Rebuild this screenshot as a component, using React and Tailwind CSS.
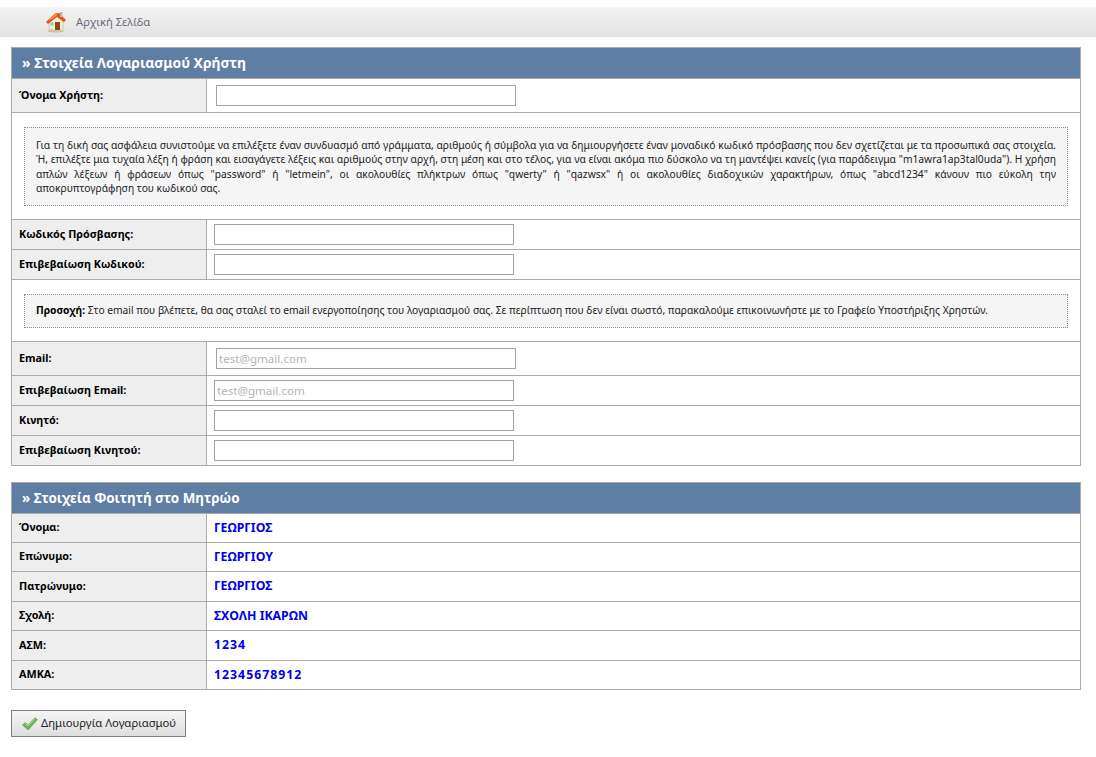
const font = "font-['Noto_Sans','DejaVu_Sans',sans-serif]";

const infoLines = [
  'Για τη δική σας ασφάλεια συνιστούμε να επιλέξετε έναν συνδυασμό από γράμματα, αριθμούς ή σύμβολα για να δημιουργήσετε έναν μοναδικό κωδικό πρόσβασης που δεν σχετίζεται με τα προσωπικά σας στοιχεία.',
  'Ή, επιλέξτε μια τυχαία λέξη ή φράση και εισαγάγετε λέξεις και αριθμούς στην αρχή, στη μέση και στο τέλος, για να είναι ακόμα πιο δύσκολο να τη μαντέψει κανείς (για παράδειγμα "m1awra1ap3tal0uda"). Η χρήση',
  'απλών λέξεων ή φράσεων όπως "password" ή "letmein", οι ακολουθίες πλήκτρων όπως "qwerty" ή "qazwsx" ή οι ακολουθίες διαδοχικών χαρακτήρων, όπως "abcd1234" κάνουν πιο εύκολη την',
];

const students = [
  { label: 'Όνομα:', value: 'ΓΕΩΡΓΙΟΣ', h: 'h-[29px]' },
  { label: 'Επώνυμο:', value: 'ΓΕΩΡΓΙΟΥ', h: 'h-[29px]' },
  { label: 'Πατρώνυμο:', value: 'ΓΕΩΡΓΙΟΣ', h: 'h-[30px]' },
  { label: 'Σχολή:', value: 'ΣΧΟΛΗ ΙΚΑΡΩΝ', h: 'h-[29px]' },
  { label: 'ΑΣΜ:', value: '1234', h: 'h-[30px]', digits: true },
  { label: 'ΑΜΚΑ:', value: '12345678912', h: 'h-[28px]', digits: true },
];

function HomeIcon() {
  return (
    <svg width="22" height="22" viewBox="0 0 22 22">
      <ellipse cx="11" cy="20" rx="8.5" ry="1.4" fill="#9c9c94" opacity="0.5" />
      <path d="M4 10 L4 18 Q10 21 18 19 L18 10 L11 4 Z" fill="#f7eccb" stroke="#cdb67e" strokeWidth="0.6" />
      <path d="M1 11 L10 2.5 L14 2 L21 9 L19 11 L12 6 L3 13 Z" fill="#d9561c" />
      <path d="M2 10 L10 3 L13 3 L8 8 Z" fill="#f08a3c" />
      <rect x="15" y="1" width="2.5" height="5" fill="#b8b8b0" />
      <rect x="10" y="11" width="5" height="8" fill="#8a4a1e" />
      <rect x="5.5" y="11.5" width="3" height="3" fill="#8fc2e0" />
    </svg>
  );
}

function CheckIcon() {
  return (
    <svg width="16" height="14" viewBox="0 0 16 14">
      <path d="M0.5 8 L3 5.5 L6 8 L13 0.8 L15.5 2.5 L6.2 13 Z" fill="#6cb356" stroke="#6f9a68" strokeWidth="0.6" />
      <path d="M3 6.5 L6 9 L13 2" fill="none" stroke="#a6d98f" strokeWidth="1" />
    </svg>
  );
}

function Header({ size, children }) {
  return (
    <div className={`h-[31px] bg-[#5f7ea3] flex items-center pl-[10px] text-white ${size} font-bold border-b border-[#aaaaaa]`}>
      » {children}
    </div>
  );
}

function Row({ label, h, children }) {
  return (
    <div className={`flex ${h} border-b border-[#aaaaaa] last:border-b-0`}>
      <div className="w-[195px] shrink-0 bg-[#eeeeee] border-r border-[#aaaaaa] pl-[7px] pb-[1px] flex items-center font-bold text-[10.8px] text-black">
        {label}
      </div>
      <div className="flex-1 flex items-center">{children}</div>
    </div>
  );
}

function Field({ placeholder, offset }) {
  return (
    <input
      type="text"
      placeholder={placeholder}
      className={`${offset ? 'ml-[9px]' : 'ml-[7px]'} w-[300px] h-[21px] border border-[#a3a3a3] bg-white px-[2px] text-[11.6px] placeholder:text-[#b5b5b5] outline-none`}
    />
  );
}

function NoteBox({ children, className }) {
  return (
    <div className={`bg-[#f5f5f5] border border-dotted border-[#7f8fa8] ${className}`}>{children}</div>
  );
}

export default function App() {
  return (
    <div className={`${font} min-h-screen bg-white pt-[7px] text-[10.25px] text-[#222]`}>
      <div className="h-[30px] bg-gradient-to-b from-[#f4f4f4] to-[#e2e2e2] flex items-center pl-[45px] gap-[9px] text-[11.2px] text-[#6b6b7b]">
        <HomeIcon />
        <span>Αρχική Σελίδα</span>
      </div>

      <div className="mx-[11px] mt-[10px] w-[1070px]">
        <div className="border border-[#aaaaaa]">
          <Header size="text-[13.9px]">Στοιχεία Λογαριασμού Χρήστη</Header>
          <Row label="Όνομα Χρήστη:" h="h-[34px]"><Field offset /></Row>
          <div className="h-[107px] border-b border-[#aaaaaa] px-[12px] pt-[14px]">
            <NoteBox className="h-[79px] px-[11px] pt-[10px] leading-[14.4px]">
              {infoLines.map((line) => (
                <div key={line} className="text-justify [text-align-last:justify] whitespace-nowrap">{line}</div>
              ))}
              <div>αποκρυπτογράφηση του κωδικού σας.</div>
            </NoteBox>
          </div>
          <Row label="Κωδικός Πρόσβασης:" h="h-[30px]"><Field /></Row>
          <Row label="Επιβεβαίωση Κωδικού:" h="h-[30px]"><Field /></Row>
          <div className="h-[62px] border-b border-[#aaaaaa] px-[12px] pt-[14px]">
            <NoteBox className="h-[34px] px-[11px] flex items-center">
              <span><b className="text-black">Προσοχή:</b> Στο email που βλέπετε, θα σας σταλεί το email ενεργοποίησης του λογαριασμού σας. Σε περίπτωση που δεν είναι σωστό, παρακαλούμε επικοινωνήστε με το Γραφείο Υποστήριξης Χρηστών.</span>
            </NoteBox>
          </div>
          <Row label="Email:" h="h-[34px]"><Field offset placeholder="test@gmail.com" /></Row>
          <Row label="Επιβεβαίωση Email:" h="h-[30px]"><Field placeholder="test@gmail.com" /></Row>
          <Row label="Κινητό:" h="h-[30px]"><Field /></Row>
          <Row label="Επιβεβαίωση Κινητού:" h="h-[29px]"><Field /></Row>
        </div>

        <div className="border border-[#aaaaaa] mt-[16px]">
          <Header size="text-[13.4px]">Στοιχεία Φοιτητή στο Μητρώο</Header>
          {students.map((s) => (
            <Row key={s.label} label={s.label} h={s.h}>
              <span className={`ml-[7px] font-bold text-[12.3px] text-[#0000ee] ${s.digits ? 'tracking-[1px]' : ''}`}>{s.value}</span>
            </Row>
          ))}
        </div>

        <button className="mt-[20px] w-[175px] h-[27px] border border-[#808080] bg-gradient-to-b from-[#f6f6f6] to-[#dedede] flex items-center gap-[3px] pl-[10px] text-[11.3px] text-[#222] whitespace-nowrap">
          <CheckIcon />
          <span>Δημιουργία Λογαριασμού</span>
        </button>
      </div>
    </div>
  );
}
